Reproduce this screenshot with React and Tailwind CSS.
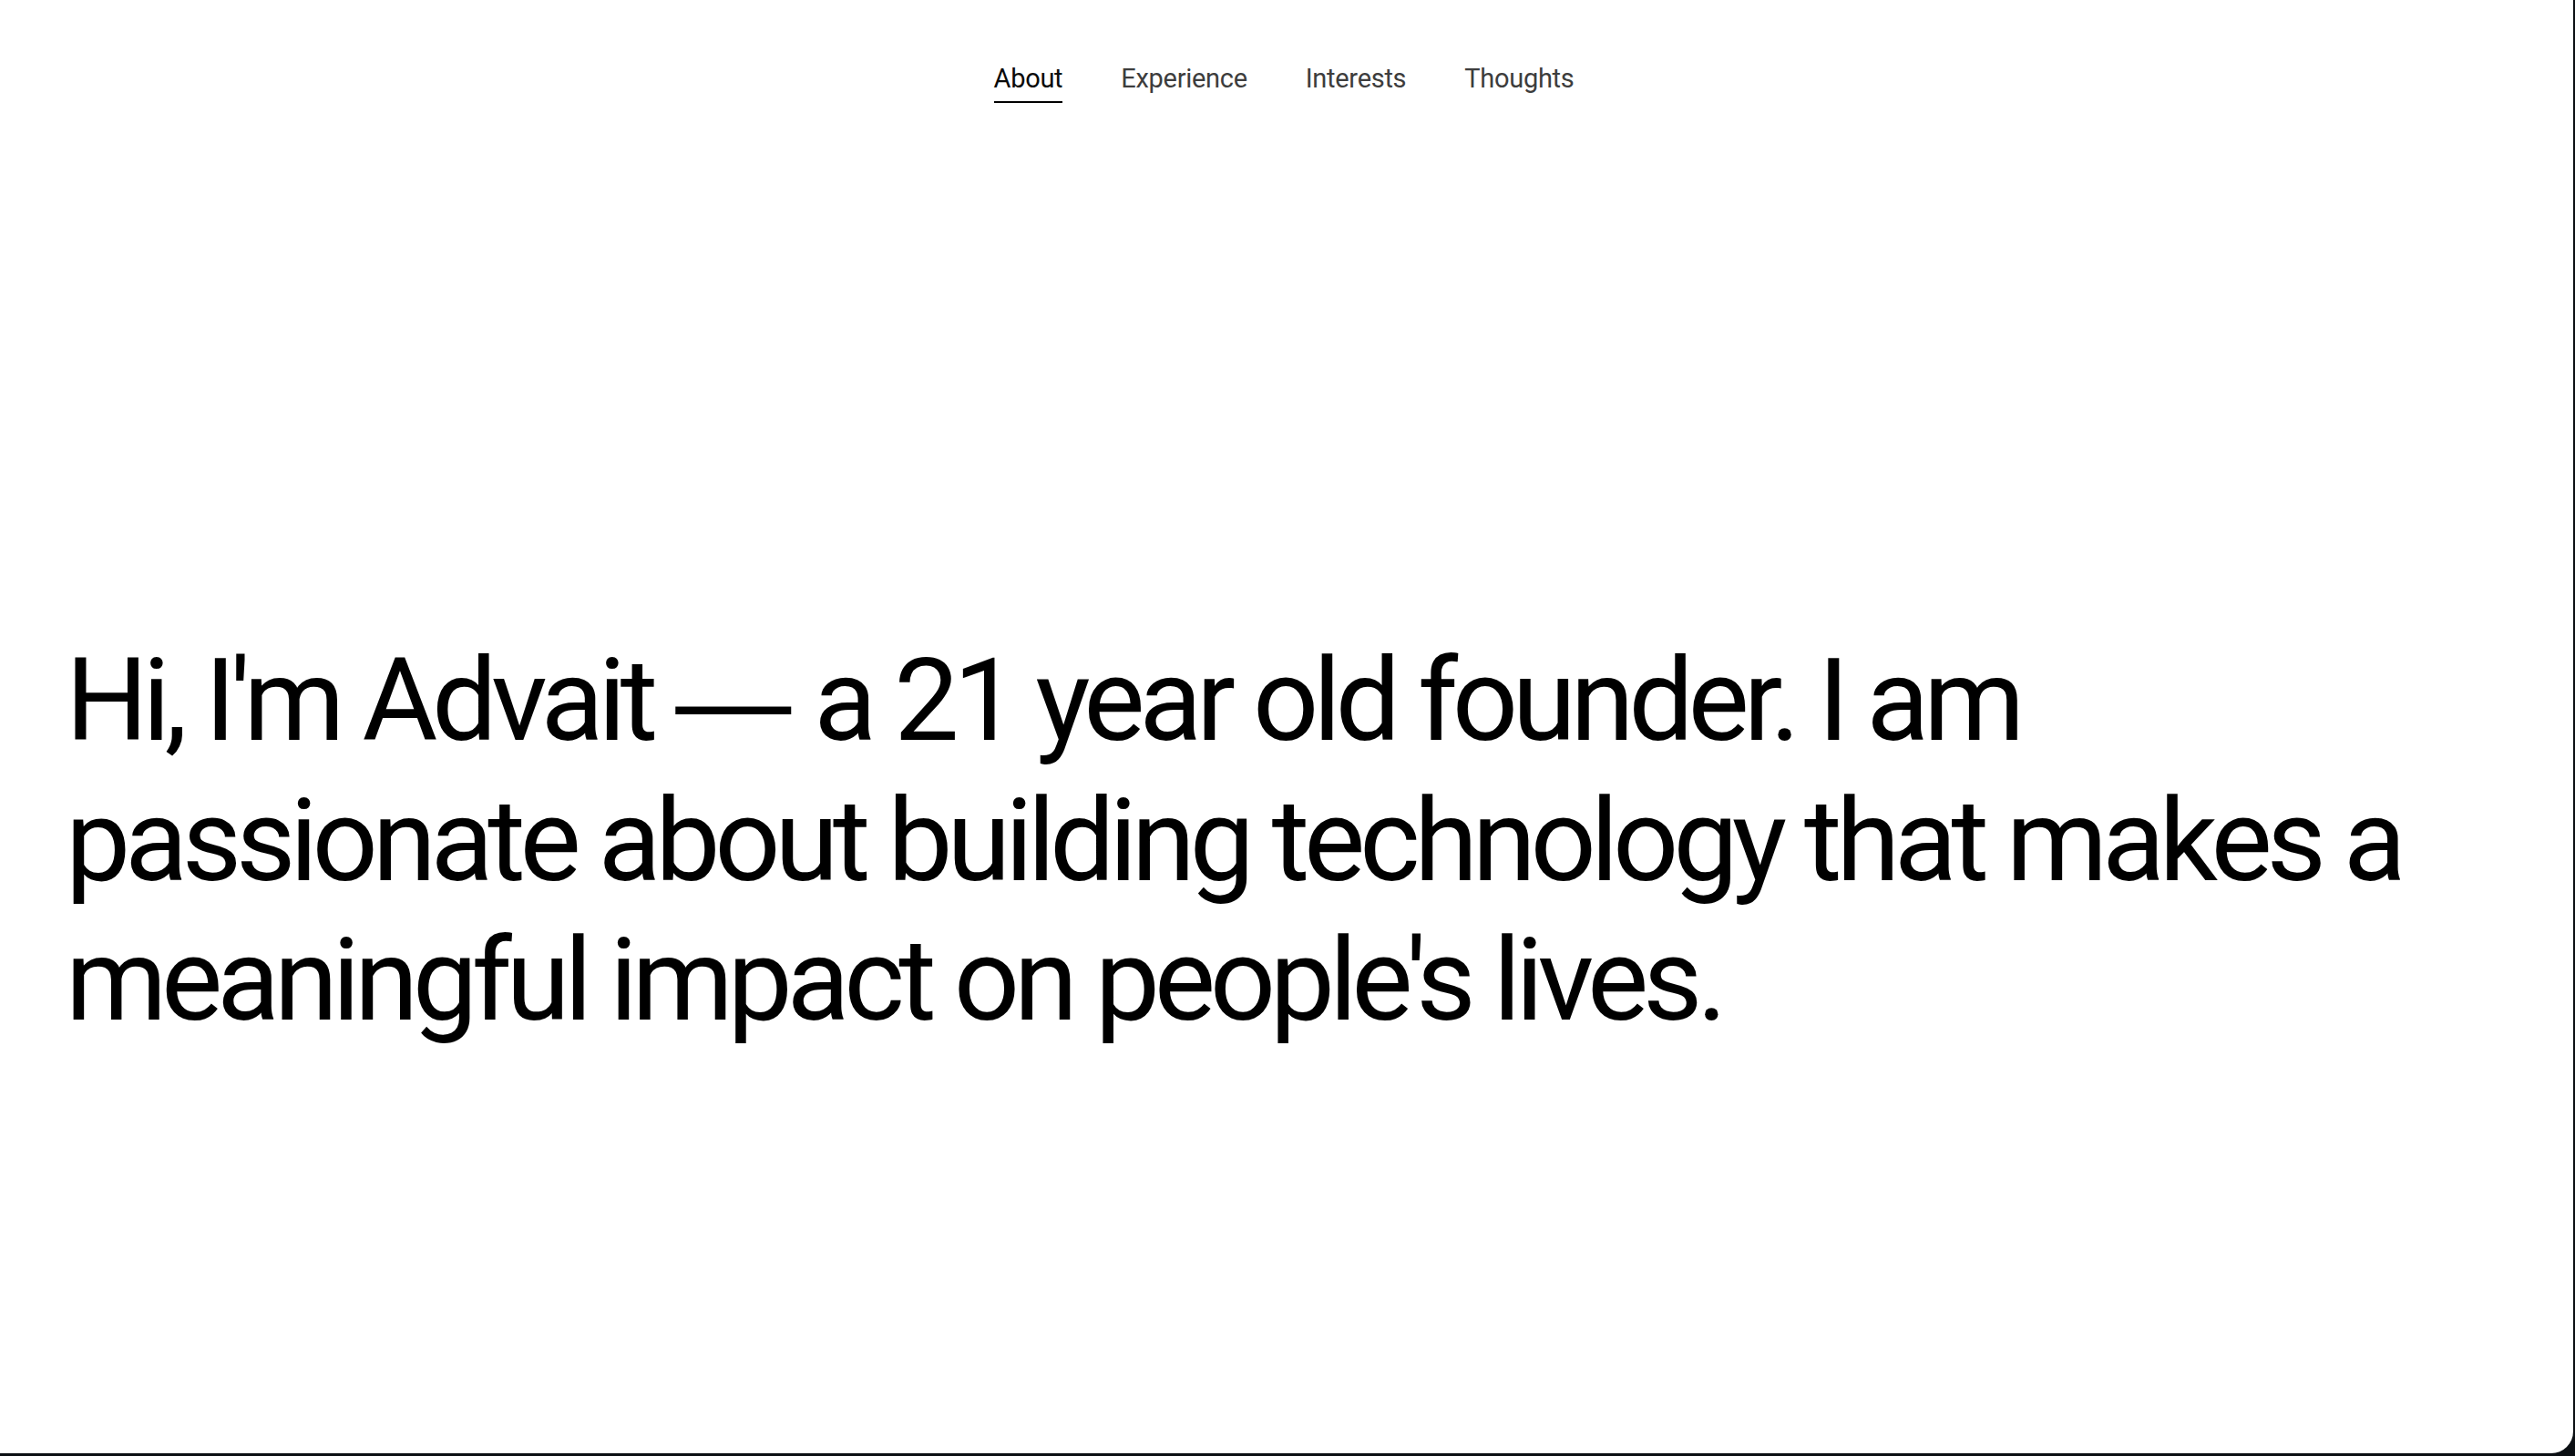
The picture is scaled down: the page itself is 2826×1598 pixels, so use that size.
export default function App() {
  const items = ["About", "Experience", "Interests", "Thoughts"];
  return (
    <div className="w-[2826px] h-[1598px] bg-[#0b0f13] overflow-hidden" style={{ fontFamily: "Roboto, 'Liberation Sans', sans-serif" }}>
      <div className="w-[2824px] h-[1595px] bg-white rounded-br-[24px] flex flex-col">
        <nav className="flex justify-center gap-16 pt-[68px] pr-[6px]">
          {items.map((t, i) => (
            <a
              key={t}
              className={
                i === 0
                  ? "text-[29px] leading-[36px] text-[#0a0a0a] border-b-2 border-black pb-[7px] tracking-[-0.01em]"
                  : "text-[29px] leading-[36px] text-[#3d3d3d] pb-[7px] tracking-[-0.01em]"
              }
            >
              {t}
            </a>
          ))}
        </nav>
        <main className="pl-[72px] pr-[120px] pt-[579px]">
          <h1 className="text-[127px] leading-[153.6px] tracking-[-0.05em] text-black font-normal">
            Hi, I'm Advait <span className="font-['Liberation_Sans'] tracking-normal">—</span> a 21 year old founder. I am passionate about building technology that makes a meaningful impact on people's lives.
          </h1>
        </main>
      </div>
    </div>
  );
}
